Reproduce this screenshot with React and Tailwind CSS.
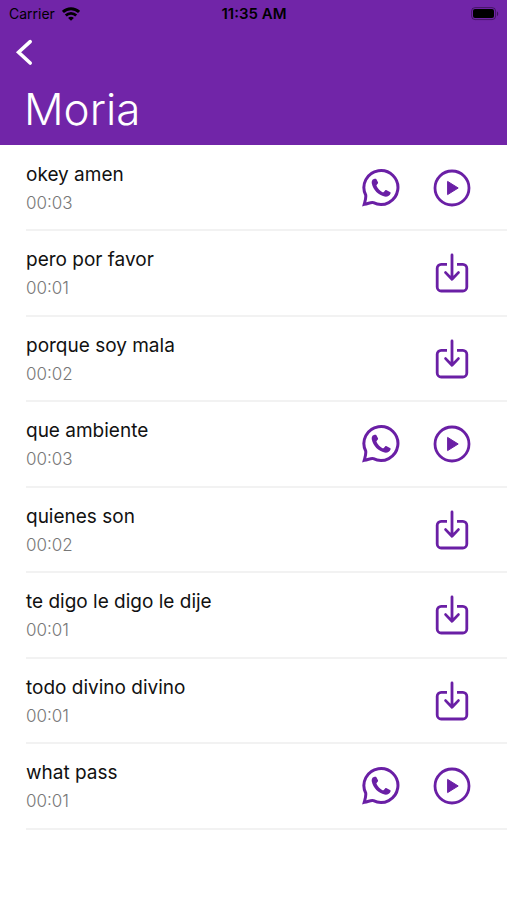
import React from 'react';

const audios = [
  { title: 'okey amen', duration: '00:03', downloaded: true },
  { title: 'pero por favor', duration: '00:01', downloaded: false },
  { title: 'porque soy mala', duration: '00:02', downloaded: false },
  { title: 'que ambiente', duration: '00:03', downloaded: true },
  { title: 'quienes son', duration: '00:02', downloaded: false },
  { title: 'te digo le digo le dije', duration: '00:01', downloaded: false },
  { title: 'todo divino divino', duration: '00:01', downloaded: false },
  { title: 'what pass', duration: '00:01', downloaded: true },
];

const WhatsAppIcon = () => (
  <svg className="w-10 h-10" viewBox="0 0 40 40" fill="none" aria-hidden="true">
    <path
      d="M3.2 36.400C4.400 32 5.200 30 4.700 27A17 17 0 1 1 12.400 34.700C10.300 34 8.300 35.300 3.200 36.400Z"
      stroke="currentColor" strokeWidth="3" strokeLinejoin="miter"
    />
    <path
      d="M13 11C11 11.400 10.400 13.600 10.800 15.600C12 22 17.500 27.400 23.600 28.600C26.400 29 29 27.600 29.600 25.200C29.800 24.600 29.500 24.200 29 23.900L25.600 22.200C25 21.900 24.500 22 24.100 22.500L22.800 24C22.400 24.400 22 24.500 21.500 24.200C19 23 16.600 20.400 15.600 18.100C15.300 17.500 15.400 17.200 15.800 16.800L16.800 15.600C17.100 15.200 17.200 14.800 17 14.300L15.400 11.300C15 10.600 14 10.700 13 11Z"
      fill="currentColor"
    />
  </svg>
);

const PlayIcon = () => (
  <svg className="w-10 h-10" viewBox="0 0 40 40" fill="none" aria-hidden="true">
    <circle cx="20" cy="20" r="17" stroke="currentColor" strokeWidth="2.8" />
    <path d="M15.600 13.400v13.200L26.200 20Z" fill="currentColor" stroke="currentColor" strokeWidth="1" strokeLinejoin="round" />
  </svg>
);

const DownloadIcon = () => (
  <svg
    className="w-10 h-10" viewBox="0 0 40 40" fill="none" stroke="currentColor"
    strokeWidth="2.800" strokeLinejoin="round" aria-hidden="true"
  >
    <path d="M15 11.300H9.200a4 4 0 0 0-4 4v18.700a4 4 0 0 0 4 4h21.600a4 4 0 0 0 4-4V15.300a4 4 0 0 0-4-4H25" />
    <path d="M20 2v24M13.600 19.600 20 26.200l6.400-6.600" strokeLinecap="round" />
  </svg>
);

const StatusBar = () => (
  <div className="grid grid-cols-3 items-center h-7 pl-[9px] pr-2 text-black">
    <div className="flex items-center gap-[7px] text-sm">
      Carrier
      <svg className="w-[18px] h-[14px]" viewBox="0 0 18 14" fill="none" stroke="currentColor" aria-hidden="true">
        <path d="M.9 5a11.500 11.500 0 0 1 16.200 0" strokeWidth="3" />
        <path d="M3.800 8.500a7.200 7.200 0 0 1 10.400 0" strokeWidth="2.700" />
        <path d="M9 13.800 6.100 10.900a4 4 0 0 1 5.800 0Z" fill="currentColor" stroke="none" />
      </svg>
    </div>
    <div className="text-center text-[15px] font-semibold">11:35 AM</div>
    <svg className="w-7 h-[14px] justify-self-end" viewBox="0 0 28 14" aria-hidden="true">
      <rect x="0.600" y="0.600" width="24" height="12" rx="3.500" fill="none" stroke="#000" strokeOpacity="0.400" />
      <rect x="2" y="2" width="21" height="9" rx="2" fill="#000" />
      <path d="M26 4.500v4.500c1.600-.6 1.600-3.900 0-4.500Z" fill="#000" fillOpacity="0.450" />
    </svg>
  </div>
);

const AudioRow = ({ audio }) => (
  <li className="flex items-center pr-[35px] border-b-2 border-[#f2f2f2] odd:min-h-[85px] even:min-h-[86px]">
    <div className="flex-1 min-w-0 pt-0.5">
      <h2 className="text-[19px] leading-7 text-[#111111]">{audio.title}</h2>
      <p className="text-[17px] leading-7 font-light text-[#777777]">{audio.duration}</p>
    </div>
    <div className="flex items-center gap-[31px] text-[#6a1fa5]">
      {audio.downloaded ? (
        <>
          <button type="button" aria-label={`Share ${audio.title}`}><WhatsAppIcon /></button>
          <button type="button" aria-label={`Play ${audio.title}`}><PlayIcon /></button>
        </>
      ) : (
        <button type="button" aria-label={`Download ${audio.title}`}><DownloadIcon /></button>
      )}
    </div>
  </li>
);

const App = () => (
  <div className="min-h-screen bg-white font-['Inter','Liberation_Sans',sans-serif]">
    <header className="bg-[#7125a8] pb-2">
      <StatusBar />
      <button type="button" aria-label="Back" className="block ml-3 mt-2.5 text-white">
        <svg className="w-6 h-7" viewBox="0 0 24 28" fill="none" stroke="currentColor" strokeWidth="3.600" strokeLinecap="round" aria-hidden="true">
          <path d="M18.200 3.600 6.600 14.300 18.200 25" />
        </svg>
      </button>
      <h1 className="mt-[15px] pl-6 text-[44px] leading-14 font-light text-white">Moria</h1>
    </header>

    <ul className="pl-[26px] pt-px">
      {audios.map((audio) => (
        <AudioRow key={audio.title} audio={audio} />
      ))}
    </ul>
  </div>
);

export default App;
